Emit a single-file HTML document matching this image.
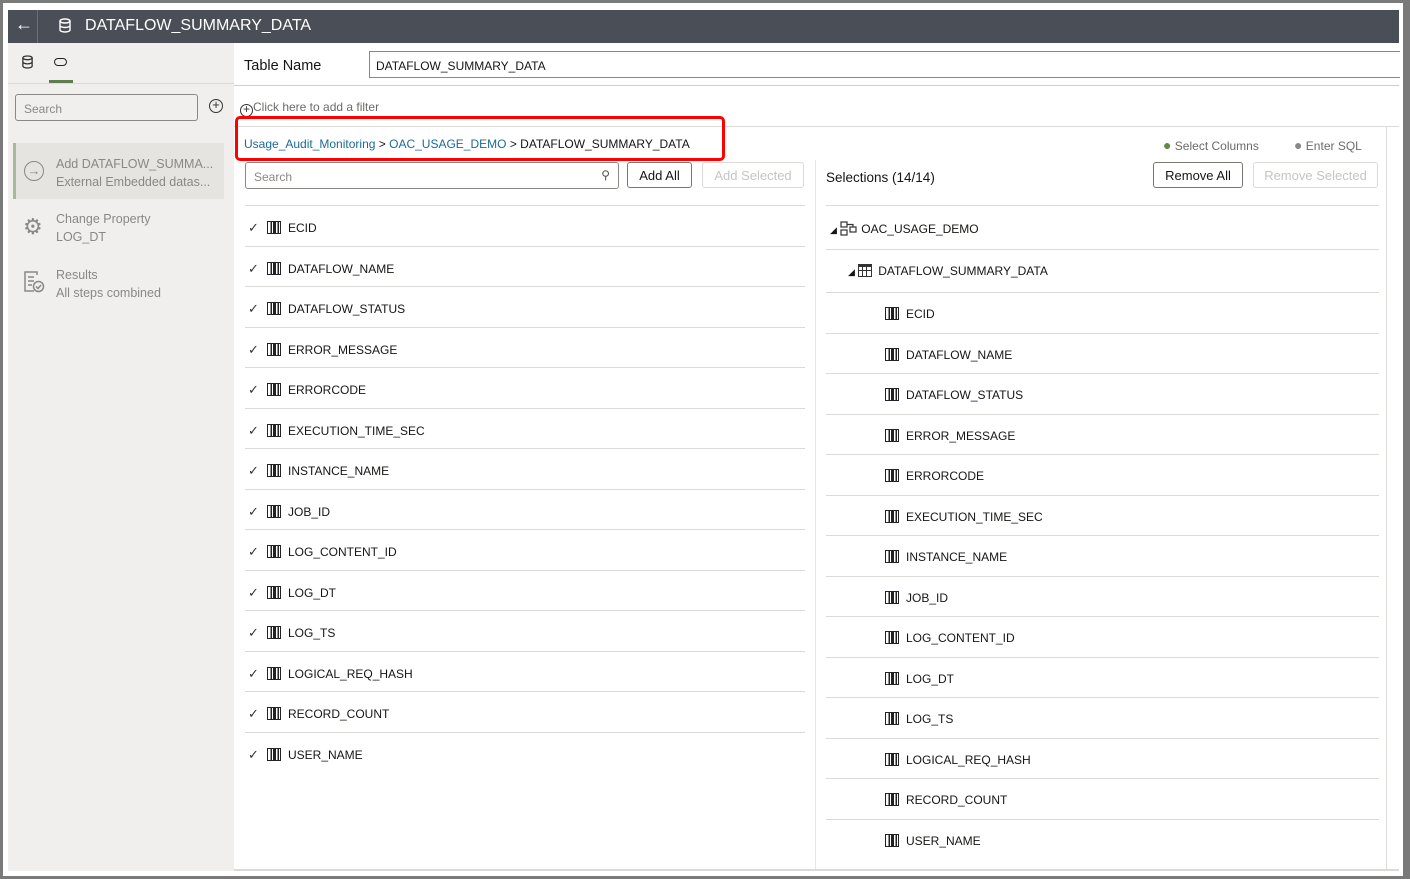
<!DOCTYPE html>
<html><head><meta charset="utf-8"><style>
*{box-sizing:border-box;margin:0;padding:0}
body{width:1410px;height:879px;background:#7a7a7a;font-family:"Liberation Sans",sans-serif;position:relative;overflow:hidden;color:#161513}
.abs{position:absolute}
.frame{left:3px;top:3px;width:1400px;height:873px;background:#fff}
.top{left:8px;top:10px;width:1391px;height:33px;background:#4a4e56;color:#fff}
.side{left:8px;top:43px;width:226px;height:828px;background:#f1efed}
.t{font-size:12px;white-space:nowrap}
.g{color:#8a8885}
.row{position:absolute;height:1px;background:#dcdad7}
.btn{position:absolute;height:26px;border:1px solid #7a7773;border-radius:3px;font-size:13px;text-align:center;line-height:26px;background:#fff}
.dis{border-color:#dcdad7;color:#c7c5c2}
.col{display:inline-block;width:14px;height:13px;vertical-align:-2px;margin-right:7px;border:1.3px solid #222;background:linear-gradient(90deg,transparent 0 2.5px,#222 2.5px 3.8px,transparent 3.8px 5px,#222 5px 8px,transparent 8px 9.5px,#222 9.5px 10.8px,transparent 10.8px)}
.ck{display:inline-block;width:19px;font-size:13px;color:#333}
</style></head><body>
<div class="abs frame"></div>
<div class="abs top">
 <div class="abs" style="left:7px;top:4px;font-size:18px">&#8592;</div>
 <div class="abs" style="left:29px;top:0;width:1px;height:33px;background:#6a6e75"></div>
 <svg class="abs" style="left:50px;top:8px" width="14" height="15" viewBox="0 0 14 15" fill="none" stroke="#fff" stroke-width="1.4"><ellipse cx="7" cy="3" rx="5" ry="2"/><path d="M2 3v9c0 1 2.2 2 5 2s5-1 5-2V3M2 7.5c0 1 2.2 2 5 2s5-1 5-2"/></svg>
 <div class="abs" style="left:77px;top:7px;font-size:16px">DATAFLOW_SUMMARY_DATA</div>
</div>
<div class="abs side">
 <svg class="abs" style="left:13px;top:12px" width="13" height="14" viewBox="0 0 14 15" fill="none" stroke="#333" stroke-width="1.4"><ellipse cx="7" cy="3" rx="5" ry="2"/><path d="M2 3v9c0 1 2.2 2 5 2s5-1 5-2V3M2 7.5c0 1 2.2 2 5 2s5-1 5-2"/></svg>
 <div class="abs" style="left:46px;top:15px;width:13px;height:8px;border:1.6px solid #222;border-radius:4px"></div>
 <div class="abs" style="left:41px;top:37px;width:24px;height:3px;background:#5f7d4f"></div>
 <div class="abs" style="left:0;top:40px;width:226px;height:1px;background:#dcdad7"></div>
 <div class="abs t g" style="left:7px;top:51px;width:183px;height:27px;border:1px solid #8a8885;border-radius:3px;padding:7px 8px">Search</div>
 <div class="abs" style="left:201px;top:56px;width:14px;height:14px;border:1.4px solid #333;border-radius:50%;font-size:13px;line-height:10px;text-align:center;color:#333">+</div>
 <div class="abs" style="left:5px;top:100px;width:211px;height:56px;background:#e6e4e1;border-left:3px solid #a9b79c"></div>
 <div class="abs" style="left:16px;top:118px;width:20px;height:20px;border:1.6px solid #8a8885;border-radius:50%;color:#8a8885;font-size:13px;text-align:center;line-height:17px">&#8594;</div>
 <div class="abs t g" style="left:48px;top:112px;line-height:18px;font-size:12.5px">Add DATAFLOW_SUMMA...<br>External Embedded datas...</div>
 <div class="abs" style="left:15px;top:174px;color:#8a8885;font-size:22px;line-height:20px">&#9881;</div>
 <div class="abs t g" style="left:48px;top:167px;line-height:18px;font-size:12.5px">Change Property<br>LOG_DT</div>
 <svg class="abs" style="left:15px;top:228px" width="22" height="22" viewBox="0 0 22 22" fill="none" stroke="#8a8885" stroke-width="1.5"><path d="M14 4V1H2v19h9M5 6h6M5 10h6M5 14h4"/><circle cx="15.5" cy="15.5" r="5"/><path d="M13 15.5l2 2 3-3.5"/></svg>
 <div class="abs t g" style="left:48px;top:223px;line-height:18px;font-size:12.5px">Results<br>All steps combined</div>
</div>
<div class="abs t" style="left:244px;top:58px;font-size:14.5px">Table Name</div>
<div class="abs t" style="left:369px;top:51px;width:1031px;height:27px;border:1px solid #8a8885;border-right:none;padding:7px 6px">DATAFLOW_SUMMARY_DATA</div>
<div class="row" style="left:234px;top:85px;width:1165px;background:#cfcdca"></div>
<div class="abs t" style="left:240px;top:100px;color:#6d6b68"><span style="display:inline-block;width:13px;height:13px;border:1.3px solid #333;border-radius:50%;font-size:12px;line-height:9px;text-align:center;color:#333;vertical-align:-2px">+</span>Click here to add a filter</div>
<div class="row" style="left:234px;top:126px;width:1165px"></div>
<div class="abs" style="left:1386px;top:126px;width:1px;height:744px;background:#dcdad7"></div>
<div class="abs" style="left:815px;top:160px;width:1px;height:710px;background:#e8e6e3"></div>
<div class="abs" style="left:235px;top:116px;width:490px;height:45px;border:3px solid #f00;border-radius:5px"></div>
<div class="abs t" style="left:244px;top:137px"><span style="color:#1a6a96">Usage_Audit_Monitoring</span> &gt; <span style="color:#1a6a96">OAC_USAGE_DEMO</span> &gt; DATAFLOW_SUMMARY_DATA</div>
<div class="abs t" style="left:1163px;top:137px;color:#6d6b68"><span style="color:#5f8a47;font-size:14px">&#9679;</span> Select Columns</div>
<div class="abs t" style="left:1294px;top:137px;color:#6d6b68"><span style="color:#8a8885;font-size:14px">&#9679;</span> Enter SQL</div>
<div class="abs t g" style="left:245px;top:162px;width:374px;height:27px;border:1px solid #8a8885;border-radius:3px;padding:7px 8px">Search<span style="position:absolute;right:8px;top:5px;color:#555">&#9906;</span></div>
<div class="btn" style="left:627px;top:162px;width:65px">Add All</div>
<div class="btn dis" style="left:702px;top:162px;width:102px">Add Selected</div>
<div class="abs t" style="left:826px;top:170px;font-size:13.5px">Selections (14/14)</div>
<div class="btn" style="left:1153px;top:162px;width:90px">Remove All</div>
<div class="btn dis" style="left:1253px;top:162px;width:125px">Remove Selected</div>
<div id="L"></div>
<div class="row" style="left:826px;top:205px;width:553px"></div>
<div class="abs t" style="left:830px;top:221px"><span style="font-size:9px">&#9698;</span> <svg width="17" height="15" viewBox="0 0 17 15" style="vertical-align:-3px;margin-right:4px" fill="none" stroke="#333" stroke-width="1.2"><rect x="1" y="1" width="6" height="5"/><rect x="10" y="6" width="6" height="5"/><rect x="1" y="9" width="6" height="5"/><path d="M7 3.5h6v2.5"/></svg>OAC_USAGE_DEMO</div>
<div class="row" style="left:826px;top:249px;width:553px"></div>
<div class="abs t" style="left:848px;top:264px"><span style="font-size:9px">&#9698;</span> <span style="display:inline-block;width:14px;height:13px;border:1.5px solid #333;border-top-width:3px;vertical-align:-2px;margin-right:6px;background:linear-gradient(90deg,transparent 3px,#333 3px 4px,transparent 4px 7px,#333 7px 8px,transparent 8px),linear-gradient(transparent 3px,#333 3px 4px,transparent 4px)"></span>DATAFLOW_SUMMARY_DATA</div>
<div class="row" style="left:826px;top:292px;width:553px"></div>
<script>
var n=["ECID","DATAFLOW_NAME","DATAFLOW_STATUS","ERROR_MESSAGE","ERRORCODE","EXECUTION_TIME_SEC","INSTANCE_NAME","JOB_ID","LOG_CONTENT_ID","LOG_DT","LOG_TS","LOGICAL_REQ_HASH","RECORD_COUNT","USER_NAME"],h="";
for(var i=0;i<14;i++){var y=205+i*40.5;h+='<div class="row" style="left:245px;top:'+Math.round(y)+'px;width:560px"></div><div class="abs t" style="left:248px;top:'+Math.round(y+15)+'px"><span class="ck">&#10003;</span><span class="col"></span>'+n[i]+'</div>';
var r=292+i*40.5;h+='<div class="abs t" style="left:885px;top:'+Math.round(r+15)+'px"><span class="col"></span>'+n[i]+'</div>';if(i<13)h+='<div class="row" style="left:826px;top:'+Math.round(r+40.5)+'px;width:553px"></div>';}
h+='<div class="row" style="left:245px;top:732px;width:560px"></div>';
document.getElementById("L").innerHTML=h;
</script>
<div class="abs" style="left:234px;top:869px;width:1165px;height:2px;background:#dcdad7"></div>
</body></html>
